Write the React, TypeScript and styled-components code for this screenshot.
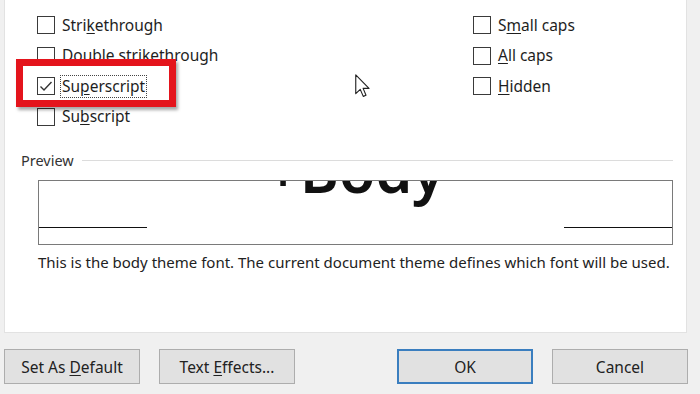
import React from 'react';
import styled, { createGlobalStyle } from 'styled-components';

const GlobalStyle = createGlobalStyle`
  html, body {
    margin: 0;
    padding: 0;
    background: #f0f0f0;
    overflow: hidden;
  }
  body {
    font-family: "Segoe UI", "Noto Sans", "Open Sans", sans-serif;
    color: #1e1e1e;
  }
`;

const Dialog = styled.div`
  width: 700px;
  height: 394px;
  display: flex;
  flex-direction: column;
  background: #f0f0f0;
`;

const Panel = styled.div`
  height: 333px;
  margin: 0 13px 0 4px;
  background: #ffffff;
  border: 1px solid #e2e2e2;
  border-top: none;
  box-sizing: border-box;
  display: flex;
  flex-direction: column;
`;

const Effects = styled.div`
  position: relative;
  display: grid;
  grid-template-columns: 436px 1fr;
  grid-auto-rows: 30.5px;
  padding: 10px 0 0 32px;
`;

const Option = styled.label`
  display: flex;
  align-items: center;
  gap: 7px;
  font-size: 15.5px;
  line-height: 1;
  cursor: default;
`;

const Box = styled.span`
  width: 18px;
  height: 18px;
  box-sizing: border-box;
  border: 1px solid #3a3a3a;
  background: #fff;
  display: flex;
  align-items: center;
  justify-content: center;
  flex: none;
`;

const Label = styled.span<{ $focused?: boolean }>`
  padding: 3px 1px;
  border: 1px dotted ${(p) => (p.$focused ? '#444' : 'transparent')};
  margin-left: -2px;
`;

const Key = styled.span`
  text-decoration: underline;
  text-underline-offset: 2px;
`;

const Highlight = styled.div`
  position: absolute;
  left: 11px;
  top: 59px;
  width: 160px;
  height: 48px;
  box-sizing: border-box;
  border: 7px solid #e4141c;
  box-shadow: 2px 3px 3px rgba(0, 0, 0, 0.35);
  pointer-events: none;
`;

const Pointer = styled.svg`
  position: absolute;
  left: 350px;
  top: 74px;
`;

const LegendRow = styled.div`
  display: flex;
  align-items: center;
  gap: 8px;
  margin: 18px 13px 0 16px;
  font-size: 14.5px;
  color: #333;
`;

const LegendLine = styled.div`
  flex: 1;
  height: 1px;
  background: #dcdcdc;
  margin-top: 1px;
`;

const PreviewBox = styled.div`
  height: 63px;
  margin: 10px 13px 0 33px;
  border: 1px solid #7a7a7a;
  overflow: hidden;
  display: flex;
  justify-content: space-between;
  align-items: flex-start;
`;

const BaseRule = styled.div`
  width: 108px;
  height: 1px;
  margin-top: 46px;
  background: #111;
`;

const Sample = styled.div`
  font-size: 59px;
  font-weight: 600;
  line-height: 59px;
  margin-top: -40px;
  color: #111;
  white-space: nowrap;
`;

const Note = styled.div`
  margin: 7px 0 0 33px;
  font-size: 15px;
  color: #222;
  white-space: nowrap;
`;

const Footer = styled.div`
  flex: 1;
  display: flex;
  align-items: flex-start;
  gap: 19px;
  padding: 16px 12px 0 4px;
`;

const Button = styled.button<{ $primary?: boolean }>`
  width: 136px;
  height: 35px;
  box-sizing: border-box;
  background: #e1e1e1;
  border: ${(p) => (p.$primary ? '2px solid #3a7ebf' : '1px solid #adadad')};
  font-family: inherit;
  font-size: 15.5px;
  color: #222;
  padding: 0;
`;

const Spacer = styled.div`
  flex: 1;
`;

const Check = () => (
  <svg width="14" height="14" viewBox="0 0 14 14">
    <path d="M1.5 7.5 L5 11 L12.5 3" fill="none" stroke="#333" strokeWidth="1.4" />
  </svg>
);

type Item = { pre: string; key: string; post: string; checked?: boolean; focused?: boolean };

const leftItems: Item[] = [
  { pre: 'Stri', key: 'k', post: 'ethrough' },
  { pre: 'Doub', key: 'l', post: 'e strikethrough' },
  { pre: 'Su', key: 'p', post: 'erscript', checked: true, focused: true },
  { pre: 'Su', key: 'b', post: 'script' },
];

const rightItems: Item[] = [
  { pre: 'S', key: 'm', post: 'all caps' },
  { pre: '', key: 'A', post: 'll caps' },
  { pre: '', key: 'H', post: 'idden' },
];

const CheckOption = ({ item }: { item: Item }) => (
  <Option>
    <Box>{item.checked && <Check />}</Box>
    <Label $focused={item.focused}>
      {item.pre}
      <Key>{item.key}</Key>
      {item.post}
    </Label>
  </Option>
);

export default function App() {
  const rows = leftItems.map((l, i) => [l, rightItems[i]] as const);
  return (
    <>
      <GlobalStyle />
      <Dialog>
        <Panel>
          <Effects>
            {rows.map(([l, r], i) => (
              <React.Fragment key={i}>
                <CheckOption item={l} />
                {r ? <CheckOption item={r} /> : <div />}
              </React.Fragment>
            ))}
            <Highlight />
            <Pointer width="15" height="24" viewBox="0 0 12 19">
              <path
                d="M0.6 0.6 L0.6 15.6 L4.2 12.2 L6.6 17.8 L8.8 16.9 L6.5 11.4 L11.2 11.4 Z"
                fill="#fff"
                stroke="#222"
                strokeWidth="0.9"
                strokeLinejoin="round"
              />
            </Pointer>
          </Effects>
          <LegendRow>
            Preview
            <LegendLine />
          </LegendRow>
          <PreviewBox>
            <BaseRule />
            <Sample>+Body</Sample>
            <BaseRule />
          </PreviewBox>
          <Note>This is the body theme font. The current document theme defines which font will be used.</Note>
        </Panel>
        <Footer>
          <Button>
            Set As <Key>D</Key>efault
          </Button>
          <Button>
            Text <Key>E</Key>ffects...
          </Button>
          <Spacer />
          <Button $primary>OK</Button>
          <Button>Cancel</Button>
        </Footer>
      </Dialog>
    </>
  );
}
